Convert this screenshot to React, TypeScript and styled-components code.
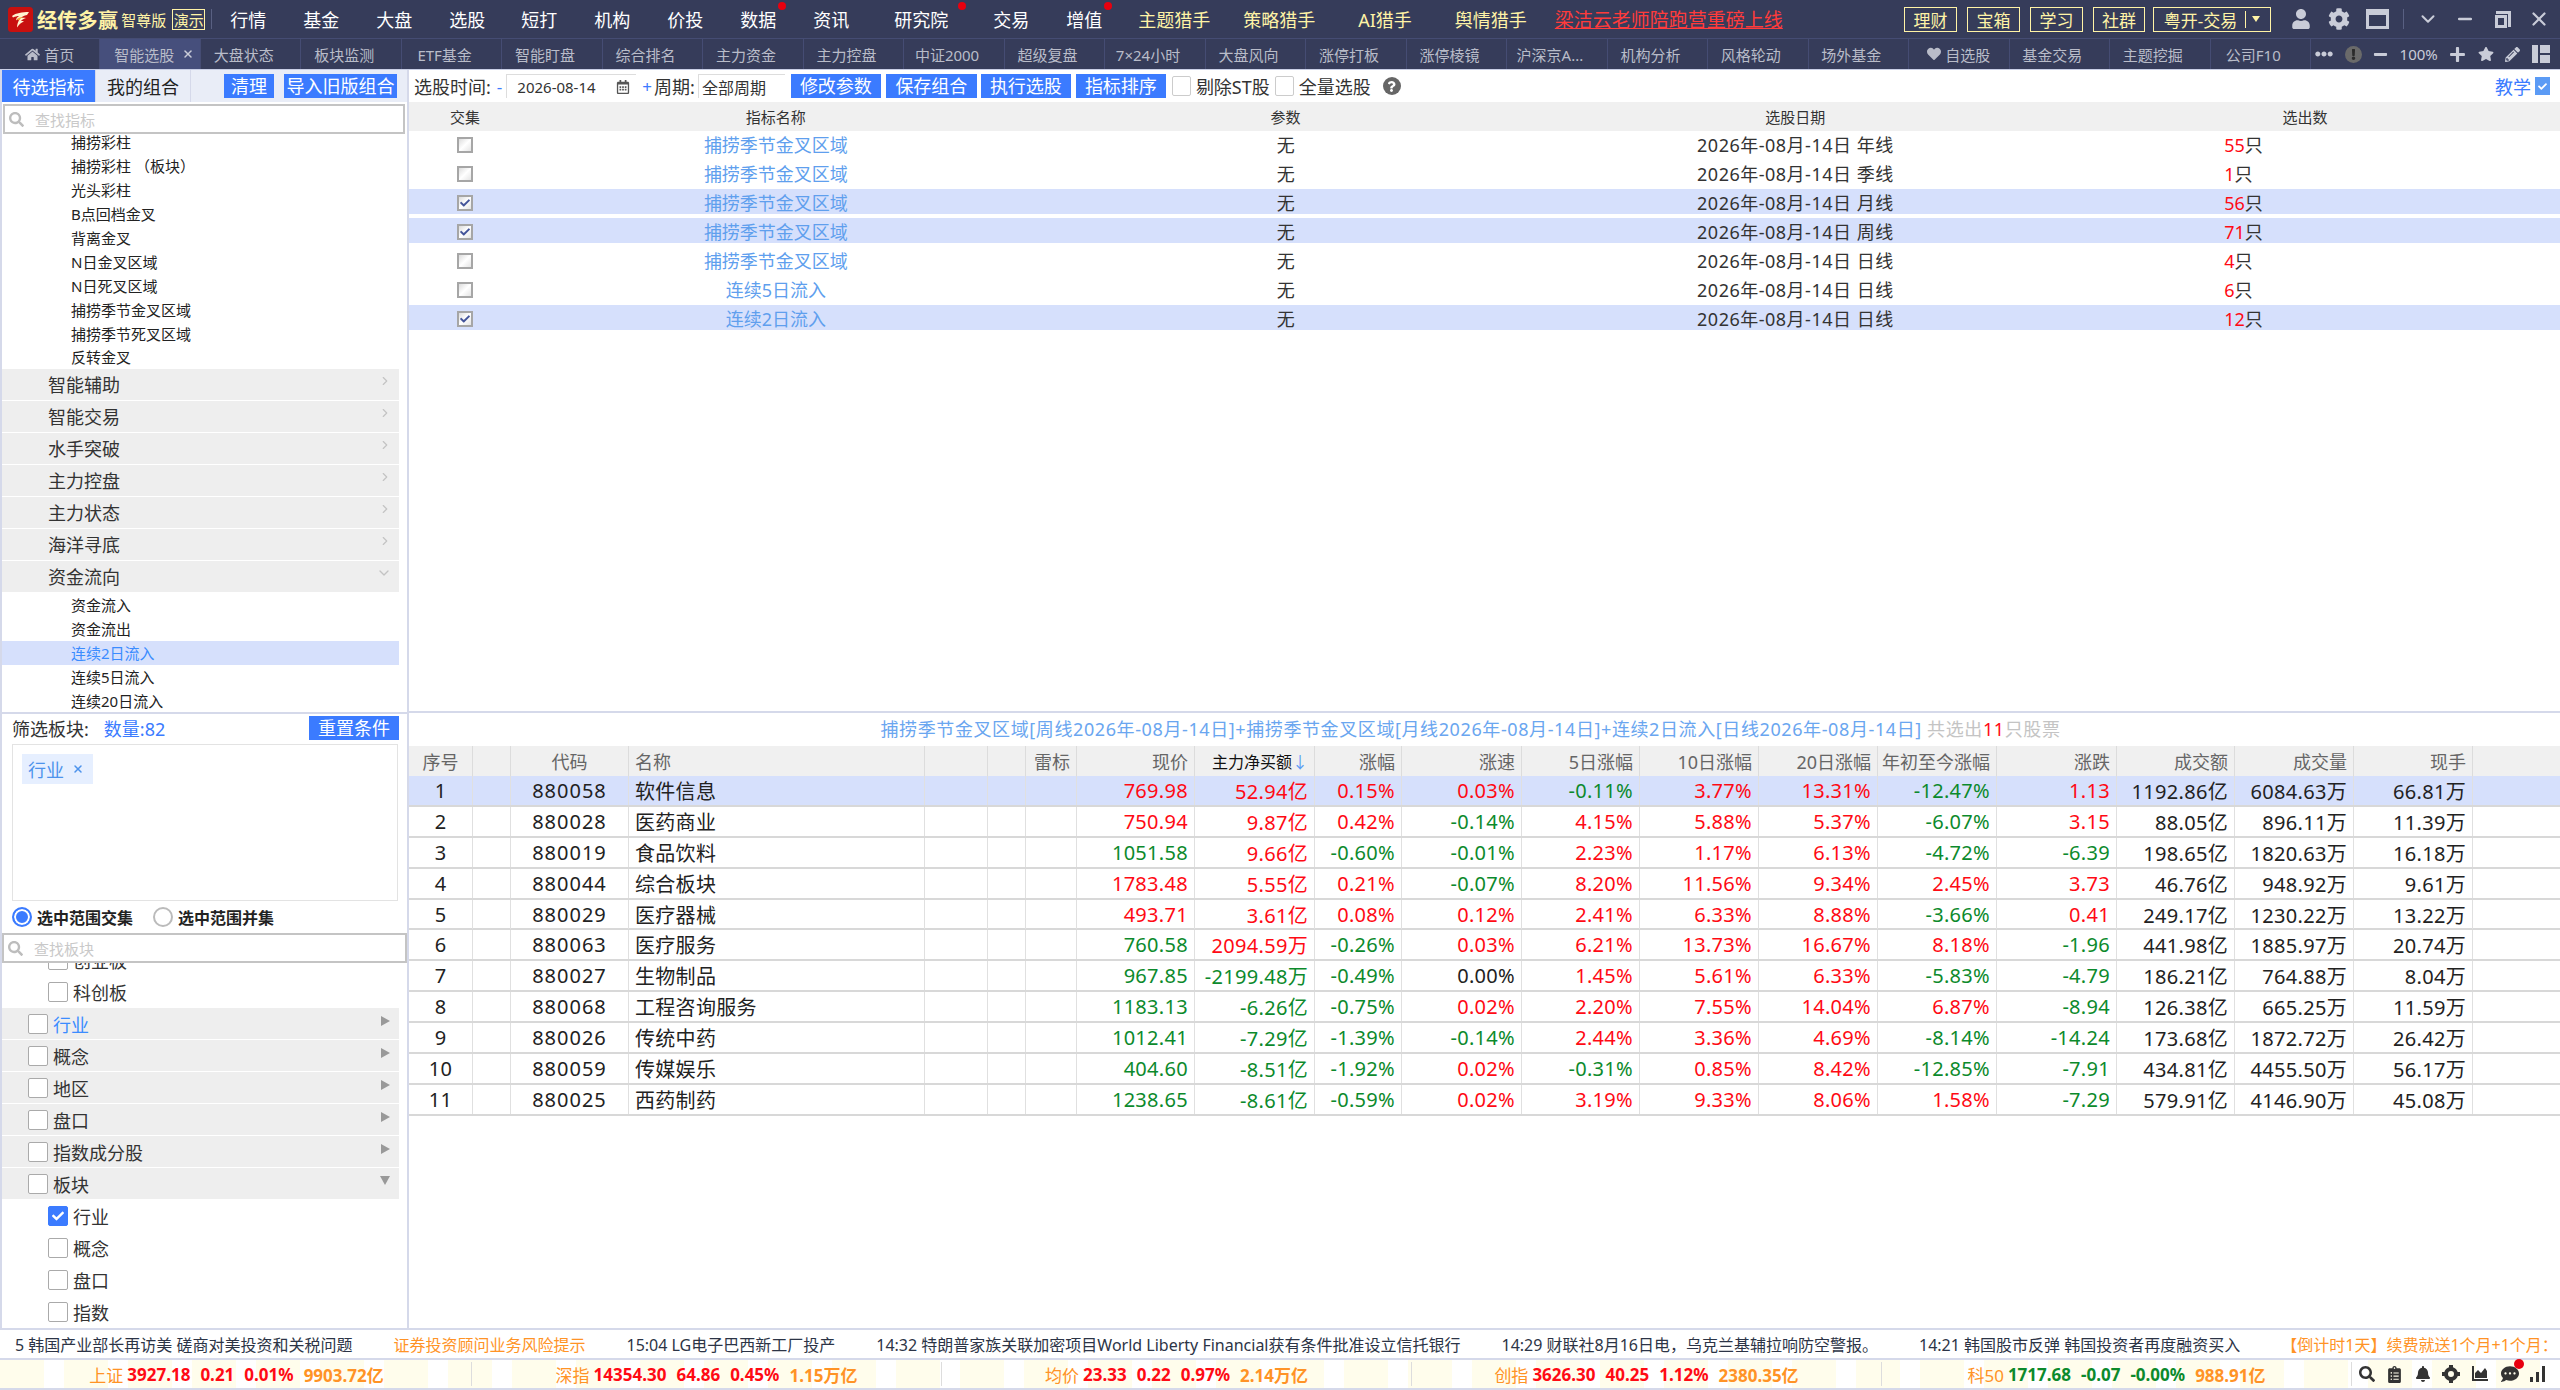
import React from 'react';
import styled, { createGlobalStyle } from 'styled-components';
import {
  FaBell,
  FaCheck,
  FaClipboardList,
  FaCog,
  FaCommentDots,
  FaEllipsisH,
  FaExclamation,
  FaHeart,
  FaHome,
  FaMinus,
  FaPencilAlt,
  FaPlus,
  FaQuestion,
  FaRegCalendarAlt,
  FaSearch,
  FaStar,
  FaUser,
} from 'react-icons/fa';
import { ChevronDown, ChevronRight, Minus, X } from 'lucide-react';

const BAR = '#363c5a';
const BLUE = '#3b7bff';
const UP = '#ff0a14';
const DOWN = '#0c8a2c';

const GlobalStyle = createGlobalStyle`
  html, body {
    margin: 0;
    padding: 0;
    height: 100%;
    overflow: hidden;
    background: #fff;
  }
  body {
    font-family: "Noto Sans", "Noto Sans CJK SC", sans-serif;
    color: #222;
  }
  * { box-sizing: border-box; }
`;

const Page = styled.div`
  display: flex;
  flex-direction: column;
  width: 2560px;
  height: 1390px;
  overflow: hidden;
`;

/* ---- top bar ---- */
const TopBar = styled.header`
  display: flex;
  align-items: center;
  height: 38px;
  padding-left: 8px;
  background: ${BAR};
`;

const LogoMark = styled.svg`
  width: 25px;
  height: 25px;
  flex: none;
`;

const BrandName = styled.span`
  margin-left: 4px;
  color: #fff3a6;
  font-size: 20px;
  font-weight: 700;
  letter-spacing: 0.3px;
  white-space: nowrap;
`;

const BrandEdition = styled.span`
  margin-left: 3px;
  color: #fff3a6;
  font-size: 15px;
  white-space: nowrap;
`;

const DemoBadge = styled.span`
  display: flex;
  align-items: center;
  justify-content: center;
  margin-left: 6px;
  border: 1px solid #fff3a6;
  width: 33px;
  height: 21px;
  color: #fff3a6;
  font-size: 15px;
`;

const BarDivider = styled.span<{ $ml: number }>`
  margin-left: ${(p) => p.$ml}px;
  width: 1px;
  height: 20px;
  background: #596082;
`;

const NavItem = styled.a<{ $ml: number; $hunter?: boolean; $dot?: number }>`
  position: relative;
  margin-left: ${(p) => p.$ml}px;
  color: ${(p) => (p.$hunter ? '#fff3a6' : '#fff')};
  font-size: 18px;
  white-space: nowrap;

  ${(p) =>
    p.$dot !== undefined &&
    `&::after {
      content: '';
      position: absolute;
      top: -4px;
      left: ${p.$dot}px;
      width: 8px;
      height: 8px;
      border-radius: 50%;
      background: #e8000f;
    }`}
`;

const PromoLink = styled.a`
  margin-left: 28px;
  color: #ff3b3b;
  font-size: 19px;
  text-decoration: underline;
  white-space: nowrap;
`;

const TopRight = styled.div`
  display: flex;
  align-items: center;
  margin-left: auto;
  height: 100%;
`;

const OutlineButton = styled.span<{ $width: number; $mr?: number }>`
  display: flex;
  align-items: center;
  justify-content: center;
  margin-right: ${(p) => p.$mr ?? 10}px;
  border: 1px solid #fff3a6;
  width: ${(p) => p.$width}px;
  height: 25px;
  color: #fff3a6;
  font-size: 17px;
  white-space: nowrap;
`;

const TradeCaret = styled.span`
  display: flex;
  align-items: center;
  margin-left: 8px;
  border-left: 1px solid #fff3a6;
  padding-left: 6px;
  height: 17px;

  &::after {
    content: '';
    border-top: 6px solid #fff3a6;
    border-right: 4px solid transparent;
    border-left: 4px solid transparent;
  }
`;

const WindowIcons = styled.div`
  display: flex;
  align-items: center;
  margin-left: 10px;
  padding-right: 10px;
  color: #c9ccd8;
`;

const WindowSlot = styled.span<{ $ml: number }>`
  display: flex;
  align-items: center;
  margin-left: ${(p) => p.$ml}px;
`;

const WindowFrame = styled.span`
  border: 3px solid #c9ccd8;
  border-top-width: 6px;
  width: 23px;
  height: 20px;
`;

const RestoreFrame = styled.span`
  position: relative;
  border: 3px solid #c9ccd8;
  width: 12px;
  height: 13px;
  margin: 4px 4px 0 0;

  &::after {
    content: '';
    position: absolute;
    top: -7px;
    right: -7px;
    width: 12px;
    height: 13px;
    border-top: 3px solid #c9ccd8;
    border-right: 3px solid #c9ccd8;
  }
`;

/* ---- tab bar ---- */
const TabBar = styled.nav`
  display: flex;
  height: 32px;
  border-top: 1px solid #454c73;
  border-bottom: 1px solid #c9cfe6;
  background: ${BAR};
`;

const TabList = styled.div`
  display: grid;
  grid-template-columns: repeat(23, minmax(0, 1fr));
  width: 2311px;
`;

const Tab = styled.span<{ $active?: boolean; $icon?: boolean }>`
  display: flex;
  align-items: center;
  justify-content: center;
  gap: 4px;
  border-right: 1px solid #454c73;
  background: ${(p) => (p.$active ? '#464f7c' : 'transparent')};
  padding: ${(p) => (p.$active ? '0 0 0 8px' : p.$icon ? '0' : '0 14px 0 0')};
  color: #b9bcc9;
  font-size: 15px;
  white-space: nowrap;
`;

const TabClose = styled(X)`
  margin-left: 4px;
  color: #c9ccd8;
`;

const TabTools = styled.div`
  display: flex;
  flex: 1;
  align-items: center;
  justify-content: space-between;
  padding: 0 10px 0 4px;
  color: #c9ccd8;
  font-size: 15px;
`;

const AlertDot = styled.span`
  display: flex;
  align-items: center;
  justify-content: center;
  border-radius: 50%;
  background: #6a6a6a;
  width: 17px;
  height: 17px;
  color: #2b2b2b;
`;

const LayoutGlyph = styled.span`
  display: grid;
  grid-template-columns: 6px 10px;
  grid-template-rows: 1fr 1fr;
  gap: 2px;
  width: 18px;
  height: 18px;

  > :first-child {
    grid-row: span 2;
    background: #c9ccd8;
  }
  > * {
    background: #c9ccd8;
  }
`;

/* ---- body ---- */
const Body = styled.div`
  display: flex;
  flex: 1;
  min-height: 0;
`;

const Sidebar = styled.aside`
  display: flex;
  flex: none;
  flex-direction: column;
  border-right: 2px solid #d5d9ea;
  border-left: 2px solid #d5d9ea;
  width: 409px;
  height: 100%;
`;

const SideHeader = styled.div`
  display: flex;
  align-items: center;
  background: #e9edf7;
  height: 32px;
  flex: none;
`;

const SideTab = styled.span<{ $active?: boolean }>`
  display: flex;
  align-items: center;
  justify-content: center;
  border-right: 1px solid #d5d9ea;
  background: ${(p) => (p.$active ? BLUE : 'transparent')};
  width: ${(p) => (p.$active ? 94 : 95)}px;
  height: 100%;
  color: ${(p) => (p.$active ? '#fff' : '#222')};
  font-size: 18px;
`;

const BlueButton = styled.button<{ $width: number; $ml?: number }>`
  flex: none;
  margin: 0 0 0 ${(p) => p.$ml ?? 5}px;
  border: none;
  background: ${BLUE};
  padding: 0;
  width: ${(p) => p.$width}px;
  height: 24px;
  color: #fff;
  font-family: inherit;
  font-size: 18px;
  line-height: 24px;
  white-space: nowrap;
`;

const SearchBox = styled.div<{ $inset?: number }>`
  display: flex;
  flex: none;
  align-items: center;
  position: relative;
  z-index: 1;
  gap: 11px;
  margin: ${(p) => (p.$inset ? '2px 2px 0 1px' : '0')};
  border: 2px solid #c4c4c4;
  background: #fff;
  padding-left: 4px;
  height: 30px;
  color: #c9c9c9;
  font-size: 15px;
`;

const TreePane = styled.div`
  flex: 1;
  min-height: 0;
  overflow: hidden;
  border-bottom: 2px solid #d5d9ea;
`;

const TreeScroll = styled.div`
  margin-top: -4px;
  padding-right: 8px;
`;

const Leaf = styled.div<{ $active?: boolean }>`
  display: flex;
  align-items: center;
  background: ${(p) => (p.$active ? '#d6e0fc' : 'transparent')};
  padding-left: 69px;
  height: 23.9px;
  color: ${(p) => (p.$active ? '#3b8cff' : '#222')};
  font-size: 15px;
`;

const Group = styled.div`
  display: flex;
  align-items: center;
  justify-content: space-between;
  margin-bottom: 1px;
  background: #eeeeee;
  padding: 0 7px 0 46px;
  height: 31px;
  color: #333;
  font-size: 18px;
`;

const GroupArrow = styled.span`
  display: flex;
  margin-top: -6px;
  color: #c3c3c3;
`;

const FilterPane = styled.div`
  display: flex;
  flex: none;
  flex-direction: column;
  padding: 2px 9px 0 10px;
  height: 219px;
`;

const FilterHead = styled.div`
  display: flex;
  flex: none;
  align-items: center;
  height: 24px;
  font-size: 18px;
  color: #333;
`;

const FilterCount = styled.span`
  margin-left: 15px;
  color: ${BLUE};
`;

const FilterReset = styled(BlueButton)`
  margin-left: auto;
  margin-right: -1px;
`;

const TagBox = styled.div`
  flex: none;
  margin-top: 4px;
  border: 1px solid #e3e3e3;
  padding: 9px;
  height: 157px;
`;

const Tag = styled.span`
  display: inline-flex;
  align-items: center;
  gap: 8px;
  background: #e6efff;
  padding: 0 9px 0 6px;
  height: 30px;
  color: #4d93ec;
  font-size: 18px;
`;

const RadioRow = styled.div`
  display: flex;
  flex: 1;
  align-items: center;
  gap: 20px;
  font-size: 16px;
  font-weight: 700;
  color: #222;
`;

const RadioLabel = styled.label`
  display: flex;
  align-items: center;
  gap: 5px;
`;

const RadioDot = styled.span<{ $checked?: boolean }>`
  display: inline-block;
  border: 2px solid ${(p) => (p.$checked ? BLUE : '#bbb')};
  border-radius: 50%;
  background: ${(p) => (p.$checked ? BLUE : '#fff')};
  box-shadow: inset 0 0 0 2px #fff;
  width: 20px;
  height: 20px;
`;

const CheckTree = styled.div`
  flex: none;
  height: 365px;
  overflow: hidden;
`;

const CheckScroll = styled.div`
  margin-top: -19px;
  padding-right: 8px;
`;

const CheckLeaf = styled.div`
  display: flex;
  align-items: center;
  gap: 5px;
  padding-left: 46px;
  height: 32px;
  font-size: 18px;
  color: #333;
`;

const CheckGroup = styled.div<{ $link?: boolean }>`
  display: flex;
  align-items: center;
  gap: 5px;
  margin-bottom: 1px;
  background: #eeeeee;
  padding: 0 9px 0 26px;
  height: 31px;
  color: ${(p) => (p.$link ? '#3b8cff' : '#333')};
  font-size: 18px;
`;

const Triangle = styled.span<{ $open?: boolean }>`
  margin: -6px 0 0 auto;
  ${(p) =>
    p.$open
      ? `border-top: 9px solid #999; border-left: 5px solid transparent; border-right: 5px solid transparent;`
      : `border-left: 9px solid #999; border-top: 5px solid transparent; border-bottom: 5px solid transparent;`}
`;

const SquareCheck = styled.span<{ $checked?: boolean }>`
  display: flex;
  flex: none;
  align-items: center;
  justify-content: center;
  border: 1px solid ${(p) => (p.$checked ? BLUE : '#aaa')};
  border-radius: 2px;
  background: ${(p) => (p.$checked ? BLUE : '#fff')};
  width: 20px;
  height: 20px;
  color: #fff;
`;

/* ---- main area ---- */
const Main = styled.main`
  display: flex;
  flex: 1;
  flex-direction: column;
  min-width: 0;
`;

const Toolbar = styled.div`
  display: flex;
  flex: none;
  align-items: center;
  padding-left: 5px;
  height: 32px;
  font-size: 18px;
  color: #333;
`;

const Stepper = styled.span<{ $ml: number }>`
  margin-left: ${(p) => p.$ml}px;
  color: ${BLUE};
  font-size: 17px;
`;

const FieldLabel = styled.span`
  margin-left: 2px;
`;

const FieldBox = styled.span<{ $width: number; $ml: number }>`
  display: flex;
  align-items: center;
  justify-content: space-between;
  margin-left: ${(p) => p.$ml}px;
  border-top: 1px solid #ddd;
  border-left: 1px solid #ddd;
  padding: 0 6px 0 3px;
  width: ${(p) => p.$width}px;
  height: 24px;
  font-size: 16px;
  white-space: nowrap;
`;

const DateField = styled(FieldBox)`
  padding-left: 10px;
  font-size: 15px;
`;

const PlainCheck = styled.span<{ $ml: number }>`
  margin: 0 5px 0 ${(p) => p.$ml}px;
  border: 1px solid #ccc;
  border-radius: 2px;
  width: 19px;
  height: 20px;
`;

const HelpDot = styled.span`
  display: flex;
  align-items: center;
  justify-content: center;
  margin-left: 12px;
  border-radius: 50%;
  background: #666;
  width: 18px;
  height: 18px;
  color: #fff;
`;

const TeachLink = styled.span`
  display: flex;
  align-items: center;
  gap: 4px;
  margin-left: auto;
  padding-right: 10px;
  color: ${BLUE};
`;

const TeachIcon = styled.span`
  display: flex;
  align-items: center;
  justify-content: center;
  background: #5b9bf5;
  width: 15px;
  height: 18px;
  color: #fff;
`;

const PickPane = styled.section`
  flex: none;
  height: 611px;
  border-bottom: 2px solid #d5d9ea;
`;

const PickGrid = styled.div<{ $head?: boolean; $on?: boolean }>`
  display: grid;
  grid-template-columns: 112px repeat(4, 1fr);
  align-items: center;
  margin-bottom: ${(p) => (p.$head ? 0 : 4)}px;
  background: ${(p) => (p.$head ? '#f0f0f0' : p.$on ? '#d6e0fc' : 'transparent')};
  height: ${(p) => (p.$head ? 29 : 25)}px;
  font-size: ${(p) => (p.$head ? 15 : 18)}px;
  text-align: center;
  color: #333;
`;

const PickCell = styled.span`
  white-space: nowrap;
`;

const PickText = styled.span<{ $link?: boolean; $wide?: boolean }>`
  padding-bottom: 2px;
  color: ${(p) => (p.$link ? '#5f9fee' : '#333')};
  letter-spacing: ${(p) => (p.$wide ? 0.5 : 0)}px;
  white-space: nowrap;
`;

const PickCountCell = styled(PickText)`
  padding-left: 174px;
  text-align: left;
`;

const PickCount = styled.b`
  color: ${UP};
  font-weight: 400;
`;

const OldCheck = styled.span`
  display: flex;
  align-items: center;
  justify-content: center;
  margin: 0 auto;
  border: 2px solid #a6a6a6;
  background: linear-gradient(135deg, #dcdcdc, #fff 50%, #e4e4e4);
  width: 16px;
  height: 16px;
  color: #44559a;
`;

const ResultTitle = styled.div`
  flex: none;
  padding-right: 28px;
  height: 33px;
  color: #6aa6f0;
  font-size: 18px;
  letter-spacing: 0.6px;
  line-height: 33px;
  text-align: center;
  white-space: nowrap;
`;

const Muted = styled.span`
  color: #c4c4c4;
`;

const Hot = styled.span`
  color: ${UP};
`;

const COLUMNS = '63px 38px 118px 296px 63px 38px 51px 118px 120px 87px 120px 118px 119px 119px 119px 120px 118px 119px 119px 1fr';

const StockHead = styled.div`
  display: grid;
  flex: none;
  grid-template-columns: ${COLUMNS};
  background: #f0f0f0;
  height: 30px;
`;

const HeadCell = styled.span<{ $align?: string; $sorted?: boolean }>`
  display: flex;
  align-items: center;
  justify-content: ${(p) => p.$align || 'flex-end'};
  border-left: 1px solid #dcdcdc;
  padding: 0 6px;
  color: ${(p) => (p.$sorted ? '#111' : '#666')};
  font-size: ${(p) => (p.$sorted ? 16 : 18)}px;
  white-space: nowrap;

  &:first-child {
    border-left: none;
  }
`;

const SortArrow = styled.span`
  color: #5b9bf5;
`;

const StockRow = styled.div<{ $on?: boolean }>`
  display: grid;
  flex: none;
  grid-template-columns: ${COLUMNS};
  border-bottom: 2px solid #d8d8d8;
  background: ${(p) => (p.$on ? '#d6e0fc' : 'transparent')};
  height: 30.9px;
`;

const Cell = styled.span<{ $align?: string; $tone?: string }>`
  display: flex;
  align-items: center;
  justify-content: ${(p) => p.$align || 'flex-end'};
  border-left: 1px solid #e0e0e0;
  padding: 0 6px;
  color: ${(p) => p.$tone || '#222'};
  font-size: 20px;
  letter-spacing: 0.3px;
  white-space: nowrap;

  &:first-child {
    border-left: none;
  }
`;

const CodeCell = styled(Cell)`
  letter-spacing: 1px;
`;

/* ---- bottom strips ---- */
const Ticker = styled.div`
  display: flex;
  flex: none;
  gap: 41px;
  align-items: center;
  overflow: hidden;
  border-top: 2px solid #d5d9ea;
  padding: 0 16px 0 15px;
  height: 30px;
  font-size: 16px;
  white-space: nowrap;
`;

const News = styled.span<{ $warn?: boolean }>`
  flex: none;
  color: ${(p) => (p.$warn ? '#ff9326' : '#2c3446')};
`;

const IndexBar = styled.div`
  display: flex;
  flex: none;
  border-top: 2px solid #d5d9ea;
  border-bottom: 2px solid #d5d9ea;
  background: repeating-linear-gradient(90deg, #fffdec 0 44px, #fff 44px 64px);
  padding-left: 2px;
  height: 32px;
`;

const IndexCell = styled.div`
  display: flex;
  flex: none;
  align-items: center;
  justify-content: center;
  gap: 10px;
  border-right: 1px solid #ddd;
  margin: 2px 0;
  width: 470px;
  font-size: 17px;
  font-weight: 700;
  white-space: nowrap;
`;

const IndexName = styled.span`
  color: #ff9326;
  font-weight: 400;
  margin-right: -6px;
`;

const IndexValue = styled.span<{ $tone: string }>`
  color: ${(p) => p.$tone};
`;

const IndexAmount = styled.span`
  color: #ff9326;
`;

const StatusIcons = styled.div`
  display: flex;
  flex: 1;
  align-items: center;
  justify-content: space-between;
  padding: 0 15px 0 7px;
  color: #333;
`;

const IconBadge = styled.span`
  position: relative;
  display: flex;

  &::after {
    content: '';
    position: absolute;
    top: -6px;
    right: -5px;
    width: 10px;
    height: 10px;
    border-radius: 50%;
    background: #e8000f;
  }
`;

/* ---- data ---- */
const NAV: { label: string; ml: number; dot?: number; hunter?: boolean }[] = [
  { label: '行情', ml: 18 },
  { label: '基金', ml: 37 },
  { label: '大盘', ml: 37 },
  { label: '选股', ml: 37 },
  { label: '短打', ml: 36 },
  { label: '机构', ml: 37 },
  { label: '价投', ml: 37 },
  { label: '数据', ml: 37, dot: 38 },
  { label: '资讯', ml: 37 },
  { label: '研究院', ml: 45, dot: 64 },
  { label: '交易', ml: 45 },
  { label: '增值', ml: 37, dot: 38 },
  { label: '主题猎手', ml: 36, hunter: true },
  { label: '策略猎手', ml: 33, hunter: true },
  { label: 'AI猎手', ml: 43, hunter: true },
  { label: '舆情猎手', ml: 43, hunter: true },
];

const TABS = [
  '智能选股', '大盘状态', '板块监测', 'ETF基金', '智能盯盘', '综合排名', '主力资金', '主力控盘', '中证2000',
  '超级复盘', '7×24小时', '大盘风向', '涨停打板', '涨停棱镜', '沪深京A...', '机构分析', '风格轮动', '场外基金',
];

const PICKS = [
  { name: '捕捞季节金叉区域', cycle: '年线', count: 55 },
  { name: '捕捞季节金叉区域', cycle: '季线', count: 1 },
  { name: '捕捞季节金叉区域', cycle: '月线', count: 56, on: true },
  { name: '捕捞季节金叉区域', cycle: '周线', count: 71, on: true },
  { name: '捕捞季节金叉区域', cycle: '日线', count: 4 },
  { name: '连续5日流入', cycle: '日线', count: 6 },
  { name: '连续2日流入', cycle: '日线', count: 12, on: true },
];

// code, name, price, net, then the percent and amount columns in table order
const STOCKS = [
  ['880058', '软件信息', '769.98', '52.94亿', '0.15%', '0.03%', '-0.11%', '3.77%', '13.31%', '-12.47%', '1.13', '1192.86亿', '6084.63万', '66.81万'],
  ['880028', '医药商业', '750.94', '9.87亿', '0.42%', '-0.14%', '4.15%', '5.88%', '5.37%', '-6.07%', '3.15', '88.05亿', '896.11万', '11.39万'],
  ['880019', '食品饮料', '1051.58', '9.66亿', '-0.60%', '-0.01%', '2.23%', '1.17%', '6.13%', '-4.72%', '-6.39', '198.65亿', '1820.63万', '16.18万'],
  ['880044', '综合板块', '1783.48', '5.55亿', '0.21%', '-0.07%', '8.20%', '11.56%', '9.34%', '2.45%', '3.73', '46.76亿', '948.92万', '9.61万'],
  ['880029', '医疗器械', '493.71', '3.61亿', '0.08%', '0.12%', '2.41%', '6.33%', '8.88%', '-3.66%', '0.41', '249.17亿', '1230.22万', '13.22万'],
  ['880063', '医疗服务', '760.58', '2094.59万', '-0.26%', '0.03%', '6.21%', '13.73%', '16.67%', '8.18%', '-1.96', '441.98亿', '1885.97万', '20.74万'],
  ['880027', '生物制品', '967.85', '-2199.48万', '-0.49%', '0.00%', '1.45%', '5.61%', '6.33%', '-5.83%', '-4.79', '186.21亿', '764.88万', '8.04万'],
  ['880068', '工程咨询服务', '1183.13', '-6.26亿', '-0.75%', '0.02%', '2.20%', '7.55%', '14.04%', '6.87%', '-8.94', '126.38亿', '665.25万', '11.59万'],
  ['880026', '传统中药', '1012.41', '-7.29亿', '-1.39%', '-0.14%', '2.44%', '3.36%', '4.69%', '-8.14%', '-14.24', '173.68亿', '1872.72万', '26.42万'],
  ['880059', '传媒娱乐', '404.60', '-8.51亿', '-1.92%', '0.02%', '-0.31%', '0.85%', '8.42%', '-12.85%', '-7.91', '434.81亿', '4455.50万', '56.17万'],
  ['880025', '西药制药', '1238.65', '-8.61亿', '-0.59%', '0.02%', '3.19%', '9.33%', '8.06%', '1.58%', '-7.29', '579.91亿', '4146.90万', '45.08万'],
];

const INDEXES = [
  ['上证', '3927.18', '0.21', '0.01%', '9903.72亿'],
  ['深指', '14354.30', '64.86', '0.45%', '1.15万亿'],
  ['均价', '23.33', '0.22', '0.97%', '2.14万亿'],
  ['创指', '3626.30', '40.25', '1.12%', '2380.35亿'],
  ['科50', '1717.68', '-0.07', '-0.00%', '988.91亿'],
];

const NEWS = [
  { text: '5 韩国产业部长再访美 磋商对美投资和关税问题' },
  { text: '证券投资顾问业务风险提示', warn: true },
  { text: '15:04 LG电子巴西新工厂投产' },
  { text: '14:32 特朗普家族关联加密项目World Liberty Financial获有条件批准设立信托银行' },
  { text: '14:29 财联社8月16日电\uFF0C乌克兰基辅拉响防空警报。' },
  { text: '14:21 韩国股市反弹 韩国投资者再度融资买入' },
  { text: '【倒计时1天】续费就送1个月+1个月\uFF1A', warn: true },
];

const LEAVES = [
  '捕捞彩柱',
  '捕捞彩柱 \uFF08板块\uFF09',
  '光头彩柱',
  'B点回档金叉',
  '背离金叉',
  'N日金叉区域',
  'N日死叉区域',
  '捕捞季节金叉区域',
  '捕捞季节死叉区域',
  '反转金叉',
];

const toneOf = (value: string) => {
  const n = parseFloat(value);
  if (n === 0) return '#222';
  return n < 0 ? DOWN : UP;
};

const Logo = () => (
  <LogoMark viewBox="0 0 25 25">
    <rect width="25" height="25" rx="3.5" fill="#c8100f" />
    <path d="M4 9C8 6 14 5 21 5l-2 3c-3 .5-5 1.500-6 3 2-.5 3.500-.5 5 0-2 .5-4 1.500-5 3 1 0 2 0 3 .5-3 1-5 3-7 6 0-3 1-6 3-9-2 .5-3 1-4 2 0-2 1-3 3-4.500-2 0-3.500.5-6 1.500z" fill="#fff3d0" />
    <path d="M9 12c2-1.500 4-2 6-2-2 1-3 2-4 3.500z" fill="#f2a93a" />
  </LogoMark>
);

const App = () => (
  <Page>
    <GlobalStyle />
    <TopBar>
      <Logo />
      <BrandName>经传多赢</BrandName>
      <BrandEdition>智尊版</BrandEdition>
      <DemoBadge>演示</DemoBadge>
      <BarDivider $ml={6} />
      {NAV.map((item) => (
        <NavItem key={item.label} $ml={item.ml} $dot={item.dot} $hunter={item.hunter}>
          {item.label}
        </NavItem>
      ))}
      <PromoLink>梁洁云老师陪跑营重磅上线</PromoLink>
      <TopRight>
        <OutlineButton $width={53}>理财</OutlineButton>
        <OutlineButton $width={53}>宝箱</OutlineButton>
        <OutlineButton $width={53}>学习</OutlineButton>
        <OutlineButton $width={52} $mr={8}>社群</OutlineButton>
        <OutlineButton $width={118}>
          粤开-交易
          <TradeCaret />
        </OutlineButton>
        <WindowIcons>
          <WindowSlot $ml={0}><FaUser size={20} /></WindowSlot>
          <WindowSlot $ml={17}><FaCog size={22} /></WindowSlot>
          <WindowSlot $ml={16}><WindowFrame /></WindowSlot>
          <BarDivider $ml={14} />
          <WindowSlot $ml={13}><ChevronDown size={22} strokeWidth={2.2} /></WindowSlot>
          <WindowSlot $ml={16}><Minus size={20} strokeWidth={3} /></WindowSlot>
          <WindowSlot $ml={20}><RestoreFrame /></WindowSlot>
          <WindowSlot $ml={17}><X size={22} strokeWidth={2.4} /></WindowSlot>
        </WindowIcons>
      </TopRight>
    </TopBar>

    <TabBar>
      <TabList>
        <Tab $icon><FaHome size={15} />首页</Tab>
        {TABS.map((label, i) => (
          <Tab key={label} $active={i === 0}>
            {label}
            {i === 0 && <TabClose size={12} strokeWidth={3} />}
          </Tab>
        ))}
        <Tab $icon><FaHeart size={14} />自选股</Tab>
        <Tab>基金交易</Tab>
        <Tab>主题挖掘</Tab>
        <Tab>公司F10</Tab>
      </TabList>
      <TabTools>
        <FaEllipsisH size={18} />
        <AlertDot><FaExclamation size={11} /></AlertDot>
        <FaMinus size={15} />
        <span>100%</span>
        <FaPlus size={17} />
        <FaStar size={16} />
        <FaPencilAlt size={15} />
        <LayoutGlyph><i /><i /><i /></LayoutGlyph>
      </TabTools>
    </TabBar>

    <Body>
      <Sidebar>
        <SideHeader>
          <SideTab $active>待选指标</SideTab>
          <SideTab>我的组合</SideTab>
          <BlueButton $width={50} $ml={33}>清理</BlueButton>
          <BlueButton $width={113} $ml={10}>导入旧版组合</BlueButton>
        </SideHeader>
        <SearchBox $inset={1}>
          <FaSearch size={15} color="#bdbdbd" />
          查找指标
        </SearchBox>
        <TreePane>
          <TreeScroll>
            {LEAVES.map((t) => (
              <Leaf key={t}>{t}</Leaf>
            ))}
            {['智能辅助', '智能交易', '水手突破', '主力控盘', '主力状态', '海洋寻底'].map((t) => (
              <Group key={t}>
                {t}
                <GroupArrow><ChevronRight size={14} /></GroupArrow>
              </Group>
            ))}
            <Group>
              资金流向
              <GroupArrow><ChevronDown size={16} /></GroupArrow>
            </Group>
            <Leaf>资金流入</Leaf>
            <Leaf>资金流出</Leaf>
            <Leaf $active>连续2日流入</Leaf>
            <Leaf>连续5日流入</Leaf>
            <Leaf>连续20日流入</Leaf>
          </TreeScroll>
        </TreePane>
        <FilterPane>
          <FilterHead>
            筛选板块:
            <FilterCount>数量:82</FilterCount>
            <FilterReset $width={90}>重置条件</FilterReset>
          </FilterHead>
          <TagBox>
            <Tag>行业 <X size={12} strokeWidth={3} /></Tag>
          </TagBox>
          <RadioRow>
            <RadioLabel><RadioDot $checked />选中范围交集</RadioLabel>
            <RadioLabel><RadioDot />选中范围并集</RadioLabel>
          </RadioRow>
        </FilterPane>
        <SearchBox>
          <FaSearch size={15} color="#bdbdbd" />
          查找板块
        </SearchBox>
        <CheckTree>
          <CheckScroll>
            <CheckLeaf><SquareCheck />创业板</CheckLeaf>
            <CheckLeaf><SquareCheck />科创板</CheckLeaf>
            <CheckGroup $link><SquareCheck />行业<Triangle /></CheckGroup>
            <CheckGroup><SquareCheck />概念<Triangle /></CheckGroup>
            <CheckGroup><SquareCheck />地区<Triangle /></CheckGroup>
            <CheckGroup><SquareCheck />盘口<Triangle /></CheckGroup>
            <CheckGroup><SquareCheck />指数成分股<Triangle /></CheckGroup>
            <CheckGroup><SquareCheck />板块<Triangle $open /></CheckGroup>
            <CheckLeaf><SquareCheck $checked><FaCheck size={12} /></SquareCheck>行业</CheckLeaf>
            <CheckLeaf><SquareCheck />概念</CheckLeaf>
            <CheckLeaf><SquareCheck />盘口</CheckLeaf>
            <CheckLeaf><SquareCheck />指数</CheckLeaf>
          </CheckScroll>
        </CheckTree>
      </Sidebar>

      <Main>
        <Toolbar>
          选股时间:
          <Stepper $ml={6}>-</Stepper>
          <DateField $width={130} $ml={4}>
            2026-08-14
            <FaRegCalendarAlt size={14} color="#555" />
          </DateField>
          <Stepper $ml={6}>+</Stepper>
          <FieldLabel>周期:</FieldLabel>
          <FieldBox $width={87} $ml={3}>全部周期</FieldBox>
          <BlueButton $width={90} $ml={6}>修改参数</BlueButton>
          <BlueButton $width={91}>保存组合</BlueButton>
          <BlueButton $width={90} $ml={4}>执行选股</BlueButton>
          <BlueButton $width={90} $ml={5}>指标排序</BlueButton>
          <PlainCheck $ml={6} />
          剔除ST股
          <PlainCheck $ml={5} />
          全量选股
          <HelpDot><FaQuestion size={11} /></HelpDot>
          <TeachLink>
            教学
            <TeachIcon><FaCheck size={9} /></TeachIcon>
          </TeachLink>
        </Toolbar>

        <PickPane>
          <PickGrid $head>
            <PickCell>交集</PickCell>
            <PickCell>指标名称</PickCell>
            <PickCell>参数</PickCell>
            <PickCell>选股日期</PickCell>
            <PickCell>选出数</PickCell>
          </PickGrid>
          {PICKS.map((row) => (
            <PickGrid key={row.cycle + row.name} $on={row.on}>
              <OldCheck>{row.on && <FaCheck size={10} />}</OldCheck>
              <PickText $link>{row.name}</PickText>
              <PickText>无</PickText>
              <PickText $wide>2026年-08月-14日 {row.cycle}</PickText>
              <PickCountCell><PickCount>{row.count}</PickCount>只</PickCountCell>
            </PickGrid>
          ))}
        </PickPane>

        <ResultTitle>
          捕捞季节金叉区域[周线2026年-08月-14日]+捕捞季节金叉区域[月线2026年-08月-14日]+连续2日流入[日线2026年-08月-14日]{' '}
          <Muted>共选出<Hot>11</Hot>只股票</Muted>
        </ResultTitle>

        <StockHead>
          <HeadCell $align="center">序号</HeadCell>
          <HeadCell />
          <HeadCell $align="center">代码</HeadCell>
          <HeadCell $align="flex-start">名称</HeadCell>
          <HeadCell />
          <HeadCell />
          <HeadCell>雷标</HeadCell>
          <HeadCell>现价</HeadCell>
          <HeadCell $sorted>主力净买额<SortArrow>↓</SortArrow></HeadCell>
          {['涨幅', '涨速', '5日涨幅', '10日涨幅', '20日涨幅', '年初至今涨幅', '涨跌', '成交额', '成交量', '现手'].map((h) => (
            <HeadCell key={h}>{h}</HeadCell>
          ))}
          <HeadCell />
        </StockHead>
        {STOCKS.map((row, i) => {
          const [code, name, price, net, pct, ...rest] = row;
          return (
            <StockRow key={code} $on={i === 0}>
              <Cell $align="center">{i + 1}</Cell>
              <Cell />
              <CodeCell $align="center">{code}</CodeCell>
              <Cell $align="flex-start">{name}</Cell>
              <Cell />
              <Cell />
              <Cell />
              <Cell $tone={toneOf(pct)}>{price}</Cell>
              <Cell $tone={toneOf(net)}>{net}</Cell>
              <Cell $tone={toneOf(pct)}>{pct}</Cell>
              {rest.slice(0, 6).map((v, j) => (
                <Cell key={j} $tone={toneOf(v)}>{v}</Cell>
              ))}
              {rest.slice(6).map((v, j) => (
                <Cell key={j}>{v}</Cell>
              ))}
              <Cell />
            </StockRow>
          );
        })}
      </Main>
    </Body>

    <Ticker>
      {NEWS.map((n) => (
        <News key={n.text} $warn={n.warn}>{n.text}</News>
      ))}
    </Ticker>

    <IndexBar>
      {INDEXES.map(([name, value, change, pct, amount]) => {
        const tone = toneOf(change);
        return (
          <IndexCell key={name}>
            <IndexName>{name}</IndexName>
            <IndexValue $tone={tone}>{value}</IndexValue>
            <IndexValue $tone={tone}>{change}</IndexValue>
            <IndexValue $tone={tone}>{pct}</IndexValue>
            <IndexAmount>{amount}</IndexAmount>
          </IndexCell>
        );
      })}
      <StatusIcons>
        <FaSearch size={16} />
        <FaClipboardList size={17} />
        <FaBell size={16} />
        <svg width="18" height="18" viewBox="0 0 18 18">
          <circle cx="9" cy="9" r="5" fill="none" stroke="#333" strokeWidth="4" />
          <path d="M7 0h4v3H7zM7 15h4v3H7zM0 7h3v4H0zM15 7h3v4h-3z" fill="#333" />
        </svg>
        <svg width="18" height="16" viewBox="0 0 18 16">
          <path d="M1 0v15h16v-2H3V0zM4 12V7l3-3 3 3 4-5 2 3v7z" fill="#333" />
        </svg>
        <IconBadge><FaCommentDots size={18} /></IconBadge>
        <svg width="15" height="16" viewBox="0 0 15 16">
          <path d="M0 11h3v5H0zM6 6h3v10H6zM12 0h3v16h-3z" fill="#333" />
        </svg>
      </StatusIcons>
    </IndexBar>
  </Page>
);

export default App;
